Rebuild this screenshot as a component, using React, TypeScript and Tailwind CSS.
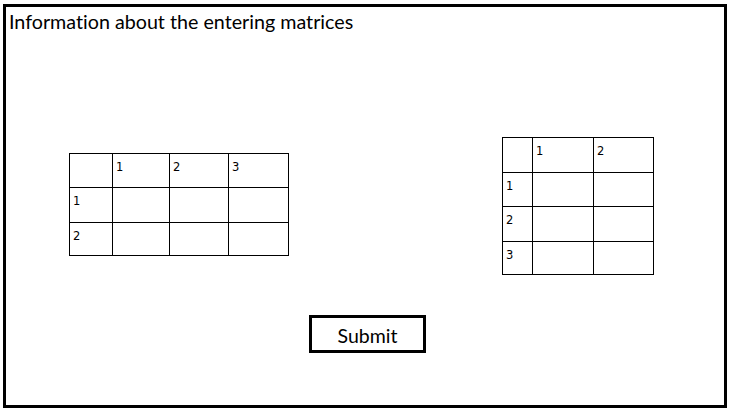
import React from "react";

const leftCols = "grid-cols-[42px_56px_58px_59px]";
const rightCols = "grid-cols-[29px_60px_59px]";

type MatrixProps = {
  cols: string;
  rows: number[];
  header: string[];
  labels: string[];
};

function MatrixGrid({ cols, rows, header, labels }: MatrixProps) {
  const cells: React.ReactNode[] = [];
  rows.forEach((h, r) => {
    for (let c = 0; c < header.length + 1; c++) {
      let text = "";
      if (r === 0 && c > 0) text = header[c - 1];
      if (r > 0 && c === 0) text = labels[r - 1];
      cells.push(
        <div
          key={`${r}-${c}`}
          className="bg-white pl-[3px] pt-[7px] text-[11.5px] leading-[13px] text-black"
          style={{ height: h }}
        >
          {text}
        </div>
      );
    }
  });
  return (
    <div
      className={`grid ${cols} gap-px bg-black p-px`}
      style={{ fontFamily: '"DejaVu Sans", Verdana, sans-serif' }}
    >
      {cells}
    </div>
  );
}

export default function App() {
  return (
    <div className="h-[411px] w-[729px] bg-white pt-[4px] pl-[3px]">
      <div
        className="flex h-[404px] w-[724px] flex-col border-[3px] border-black [font-variant-ligatures:none]"
        style={{ fontFamily: 'Lato, "Open Sans", sans-serif' }}
      >
        <div className="h-[30px] pl-[3px] pt-[3px] text-[19.7px] leading-[24px] text-black">
          Information about the entering matrices
        </div>

        <div className="mt-[100px] flex items-start">
          <div className="ml-[63px] mt-[16px]">
            <MatrixGrid
              cols={leftCols}
              rows={[33, 34, 32]}
              header={["1", "2", "3"]}
              labels={["1", "2"]}
            />
          </div>
          <div className="ml-auto mr-[70px]">
            <MatrixGrid
              cols={rightCols}
              rows={[34, 33, 34, 32]}
              header={["1", "2"]}
              labels={["1", "2", "3"]}
            />
          </div>
        </div>

        <div className="mt-[40px] pl-[303px]">
          <button className="flex h-[38px] w-[117px] items-center justify-center border-[3px] border-black bg-white pt-[3px] text-[19.5px] leading-[24px] text-black">
            Submit
          </button>
        </div>
      </div>
    </div>
  );
}
